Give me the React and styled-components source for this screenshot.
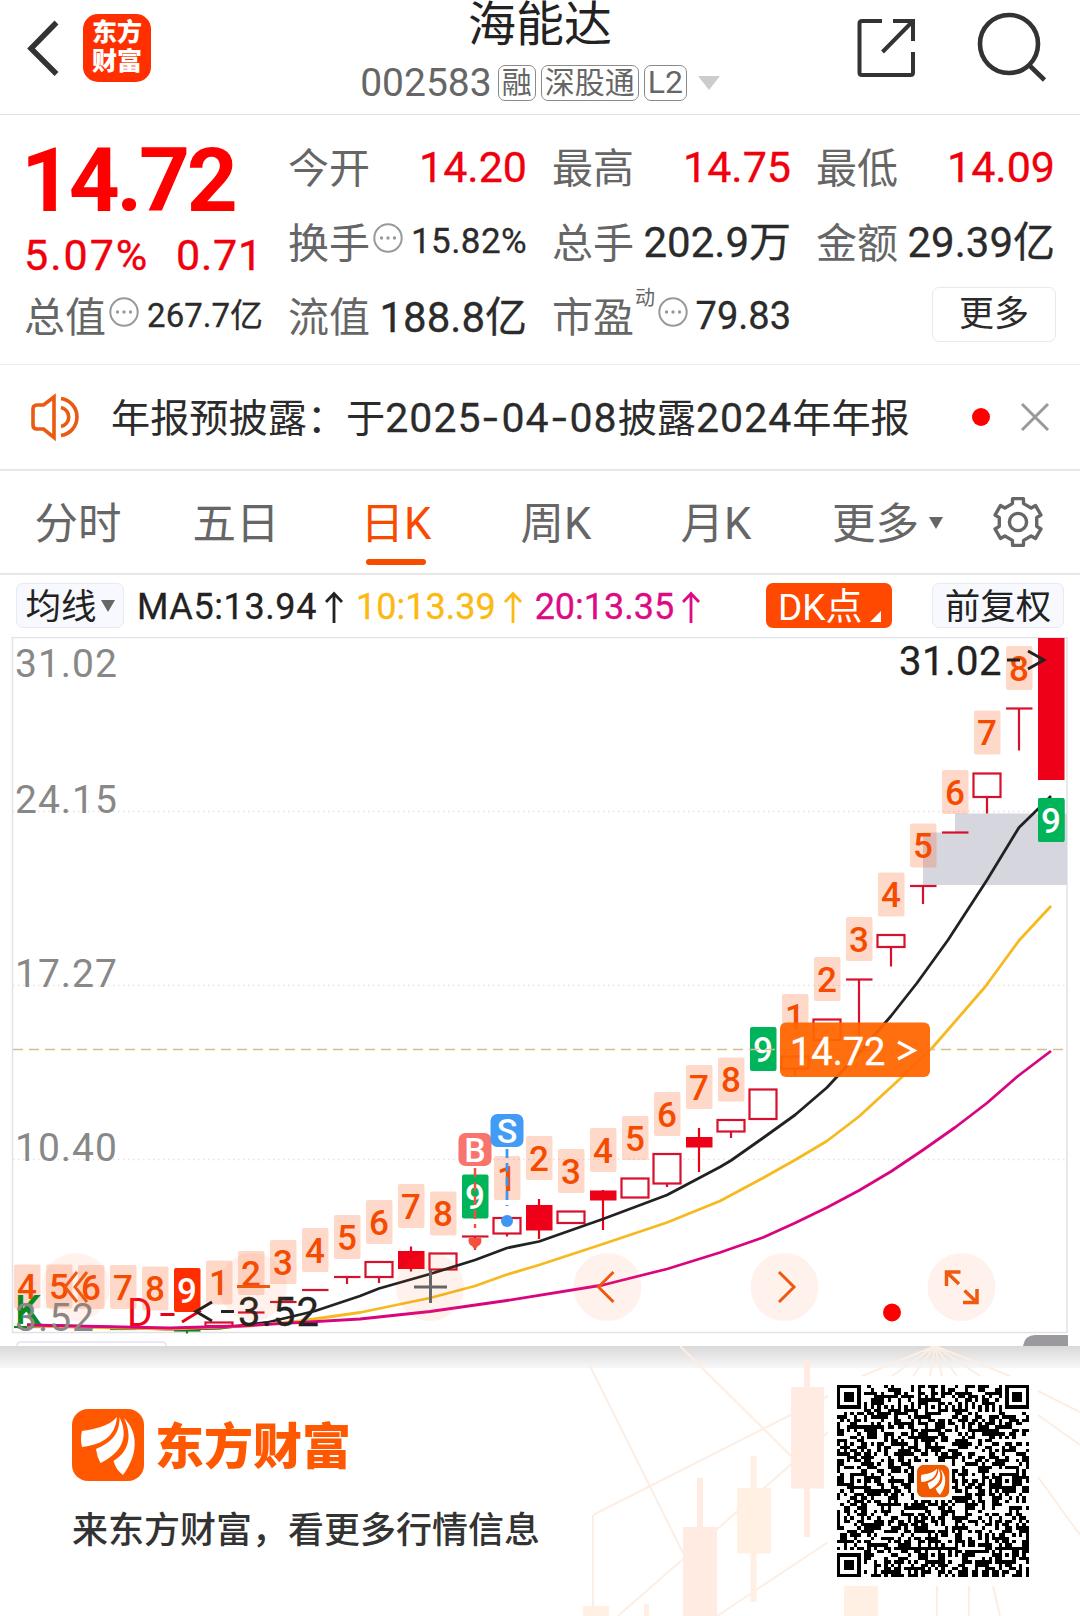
import styled, { createGlobalStyle } from "styled-components";

const GlobalStyle = createGlobalStyle`
  * {
    box-sizing: border-box;
  }

  body {
    margin: 0;
    background: #fff;
    font-family: Roboto, "Noto Sans CJK SC", sans-serif;
    color: #2b2b2b;
  }
`;

const Page = styled.main`
  width: 1080px;
  height: 1616px;
  overflow: hidden;
  display: flex;
  flex-direction: column;
  background: #fff;
`;

/* ---------- Header ---------- */

const Header = styled.header`
  height: 115px;
  flex: none;
  display: grid;
  grid-template-columns: 340px 1fr 340px;
  border-bottom: 1.5px solid #e2e2e2;
`;

const HeaderLeft = styled.div`
  display: flex;
  gap: 24px;
  padding: 14px 0 0 27px;
`;

const AppBadge = styled.div`
  width: 68px;
  height: 68px;
  border-radius: 15px;
  background: #ff2f00;
  color: #fff;
  font-size: 25px;
  font-weight: 900;
  line-height: 29px;
  text-align: center;
  padding-top: 4px;
`;

const HeaderCenter = styled.div`
  display: flex;
  flex-direction: column;
  align-items: center;
`;

const StockName = styled.h1`
  margin: 0;
  height: 60px;
  font-size: 48px;
  font-weight: 400;
  line-height: 49px;
  color: #222;
`;

const StockMeta = styled.div`
  display: flex;
  align-items: center;
  height: 46px;
  gap: 5px;
  color: #666;
`;

const Code = styled.span`
  font-size: 39px;
  margin-right: 1px;
`;

const Tag = styled.span`
  height: 36px;
  padding: 0 3px;
  border: 1.5px solid #8a8a8a;
  border-radius: 7px;
  font-size: ${(props) => props.$size || 30}px;
  line-height: 33px;
`;

const HeaderRight = styled.div`
  display: flex;
  justify-content: flex-end;
  gap: 60px;
  padding: 12px 32px 0 0;
`;

/* ---------- Quote ---------- */

const Quote = styled.section`
  height: 250px;
  flex: none;
  display: grid;
  grid-template-columns: repeat(4, 237px);
  grid-template-rows: repeat(3, 74.5px);
  column-gap: 27px;
  padding: 15px 0 0 26px;
  border-bottom: 1.5px solid #ececec;
`;

const PriceBlock = styled.div`
  grid-row: span 2;
  color: #fe0000;
`;

const Price = styled.div`
  height: 88px;
  font-size: 89px;
  font-weight: 700;
  line-height: 102px;
  letter-spacing: -3.3px;
  margin-left: -5px;
`;

const Change = styled.div`
  display: flex;
  justify-content: space-between;
  padding-right: 0;
  margin-left: -2px;
  font-size: 43px;
  line-height: 74px;
  letter-spacing: 0.8px;
  -webkit-text-stroke: 0.4px;
  color: #f0000c;

  & > span:first-child {
    letter-spacing: 2px;
  }
`;

const Cell = styled.div`
  display: flex;
  align-items: center;
  white-space: nowrap;
`;

const Label = styled.span`
  margin: -4px 0 0 -2px;
  font-size: 41px;
  color: #666;
`;

const Value = styled.span`
  margin-left: auto;
  margin-top: ${(props) => (props.$unit ? -6 : 0)}px;
  font-size: ${(props) => props.$size || 43}px;
  letter-spacing: ${(props) => props.$spacing || 0}px;
  -webkit-text-stroke: 0.3px;
  color: ${(props) => (props.$up ? "#f0000c" : "#2b2b2b")};
`;

const Sup = styled.sup`
  align-self: flex-start;
  width: 21px;
  padding-left: 1px;
  font-size: 20px;
  line-height: 39px;
  color: #666;
`;

const MoreButton = styled.button`
  width: 124px;
  height: 55px;
  margin: -4px -1px 0 auto;
  border: 1.5px solid #ebe8ea;
  border-radius: 7px;
  background: #fff;
  font: inherit;
  font-size: 35px;
  line-height: 54px;
  padding: 0;
  color: #2b2b2b;
`;

/* ---------- News ---------- */

const News = styled.section`
  height: 106px;
  flex: none;
  display: flex;
  align-items: center;
  padding: 0 30px 0 29px;
  border-bottom: 2px solid #e7e7e7;
`;

const NewsText = styled.p`
  flex: 1;
  margin: -5px 0 0 28px;
  font-size: 39.2px;
  white-space: nowrap;
`;

const NewsNumber = styled.span`
  font-size: 41px;
  letter-spacing: 1px;
  -webkit-text-stroke: 0.3px;
`;

const Hyphen = styled.span`
  display: inline-block;
  width: 20px;
  transform: scaleX(1.3);
  text-align: center;
`;

const RedDot = styled.span`
  width: 18px;
  height: 18px;
  margin-right: 30px;
  border-radius: 50%;
  background: #fe0000;
`;

/* ---------- Tabs ---------- */

const Tabs = styled.nav`
  height: 104px;
  flex: none;
  display: grid;
  grid-template-columns: 156px repeat(4, 160px) 185px 1fr;
  align-items: start;
  border-bottom: 2px solid #e7e7e7;
`;

const Tab = styled.div`
  display: flex;
  flex-direction: column;
  align-items: center;
  font-size: 43.5px;
  line-height: 88px;
  height: 100px;
  padding-top: 10px;
  color: ${(props) => (props.$active ? "#f74b00" : "#666")};

  &::after {
    content: "";
    width: 60px;
    height: 6px;
    border-radius: 3px;
    margin-top: -10px;
    flex: none;
    background: ${(props) => (props.$active ? "#f74b00" : "transparent")};
  }
`;

const MoreTab = styled.div`
  display: flex;
  align-items: center;
  gap: 10px;
  padding: 10px 0 0 36px;
  font-size: 43.5px;
  line-height: 88px;
  color: #666;
`;

const GearSlot = styled.div`
  padding: 24px 0 0 11px;
`;

/* ---------- Indicators ---------- */

const Indicators = styled.section`
  height: 62px;
  flex: none;
  display: flex;
  align-items: flex-start;
  padding: 8px 16px 0;
  font-size: 36px;
  white-space: nowrap;
`;

const Chip = styled.div`
  display: flex;
  align-items: center;
  justify-content: center;
  gap: 4px;
  height: 45px;
  width: ${(props) => props.$width}px;
  padding-bottom: 4px;
  border: 1.5px solid #e9e9f2;
  border-radius: 7px;
  background: #f7f9fe;
  font-size: 35.5px;
  color: #222;
`;

const DkChip = styled(Chip)`
  justify-content: flex-start;
  margin: 0 40px 0 auto;
  padding-left: 12px;
  border: 0;
  background: #ff4800;
  color: #fff;
  font-size: 37px;
  gap: 7px;
`;

const Corner = styled.i`
  align-self: flex-end;
  margin-bottom: 2px;
  border-left: 11px solid transparent;
  border-bottom: 11px solid #fff;
`;

const Caret = styled.i`
  position: relative;
  top: ${(props) => props.$shift || 0}px;
  border: ${(props) => props.$w / 2}px solid transparent;
  border-top: ${(props) => props.$h}px solid ${(props) => props.$color || "#666"};
  border-bottom: 0;
`;

const HeaderCaret = styled(Caret)`
  margin-left: 6px;
`;

const Average = styled.div`
  display: flex;
  align-items: center;
  gap: 8px;
  height: 47px;
  margin-left: 13px;
  letter-spacing: ${(props) => props.$spacing}px;
  -webkit-text-stroke: 0.3px;
  color: ${(props) => props.$color};
`;

const ChartSvg = styled.svg`
  display: block;
  flex: none;
  font-family: Roboto, sans-serif;
`;

/* ---------- Footer ---------- */

const Footer = styled.footer`
  position: relative;
  flex: 1;
  display: flex;
  justify-content: space-between;
  padding: 0 42px 0 72px;

  &::before {
    content: "";
    position: absolute;
    inset: 0 0 auto;
    height: 22px;
    background: linear-gradient(rgba(0, 0, 0, 0.15), rgba(0, 0, 0, 0.03));
  }
`;

const Watermark = styled.svg`
  position: absolute;
  inset: 0;
`;

const Brand = styled.div`
  position: relative;
  padding-top: 63px;
`;

const BrandRow = styled.div`
  display: flex;
  align-items: center;
  gap: 11px;
  height: 72px;
`;

const BrandName = styled.span`
  font-size: 49px;
  font-weight: 900;
  line-height: 72px;
  padding-top: 5px;
  color: #ff5800;
`;

const Slogan = styled.p`
  margin: 24px 0 0;
  font-size: 36px;
  font-weight: 500;
  line-height: 52px;
  color: #333;
`;

const QrCard = styled.div`
  position: relative;
  width: 210px;
  height: 210px;
  margin-top: 30px;
  padding: 9px;
  background: #fff;
`;

/* ---------- Icons ---------- */

const InfoSvg = styled.svg`
  flex: none;
  margin: -8px 0 0 3px;
`;

function InfoIcon() {
  return (
    <InfoSvg width="30" height="30" viewBox="0 0 30 30">
      <circle cx="15" cy="15" r="13.7" fill="none" stroke="#999" strokeWidth="2" />
      <circle cx="8.5" cy="15" r="1.7" fill="#999" />
      <circle cx="15" cy="15" r="1.7" fill="#999" />
      <circle cx="21.5" cy="15" r="1.7" fill="#999" />
    </InfoSvg>
  );
}

function GearIcon() {
  const points = [];
  for (let k = 0; k < 6; k++) {
    [
      [19.2, -17],
      [24, -13],
      [24, 13],
      [19.2, 17],
    ].forEach(([r, offset]) => {
      const a = ((k * 60 - 90 + offset) * Math.PI) / 180;
      points.push(`${26 + r * Math.cos(a)},${27 + r * Math.sin(a)}`);
    });
  }

  return (
    <svg width="54" height="54" viewBox="0 0 54 54">
      <g fill="none" stroke="#666" strokeWidth="3.4" strokeLinejoin="round">
        <polygon points={points.join(" ")} />
        <circle cx="26" cy="27" r="8.6" />
      </g>
    </svg>
  );
}

function BrandMark({ size, color = "#ff5800", ...rest }) {
  return (
    <svg width={size} height={size} viewBox="0 0 72 72" {...rest}>
      <rect width="72" height="72" rx="16" fill={color} />
      <g fill="#fff">
        <path d="M45 8C36 18 22 20 10 22Q8 30 10 38C27 36 43 30 45 8Z" />
        <path d="M47.5 8C48 26 38 34 24 40Q25 48 28.5 54C45 46 59 32 47.5 8Z" />
        <path d="M52 9C67 24 66 46 51 66Q44 61 41.5 52C52 46 63 32 52 9Z" />
      </g>
    </svg>
  );
}

/* ---------- QR code ---------- */

const QR_SIZE = 57;

function ring(x, y, cx, cy) {
  return Math.max(Math.abs(x - cx), Math.abs(y - cy));
}

function qrPath() {
  let seed = 20583;
  let d = "";
  const corners = [
    [3, 3],
    [53, 3],
    [3, 53],
  ];
  const aligns = [
    [28, 6],
    [6, 28],
    [50, 28],
    [28, 50],
    [50, 50],
  ];

  for (let y = 0; y < QR_SIZE; y++) {
    for (let x = 0; x < QR_SIZE; x++) {
      seed = (seed * 1103515245 + 12345) % 2147483648;
      let dark = seed / 2147483648 < 0.52;
      if (x === 6 || y === 6) dark = (x + y) % 2 === 0;
      aligns.forEach(([cx, cy]) => {
        const r = ring(x, y, cx, cy);
        if (r <= 2) dark = r !== 1;
      });
      corners.forEach(([cx, cy]) => {
        const r = ring(x, y, cx, cy);
        if (r <= 4) dark = r !== 4 && r !== 2;
      });
      if (ring(x, y, 28, 28) <= 5) dark = false;
      if (dark) d += `M${x} ${y}h1v1h-1z`;
    }
  }
  return d;
}

function QrCode() {
  return (
    <svg width="192" height="192" viewBox="0 0 57 57">
      <path d={qrPath()} shapeRendering="crispEdges" />
      <BrandMark x="23.7" y="23.7" size="9.7" color="#f05a00" />
    </svg>
  );
}

/* ---------- Chart ---------- */

// marker: [label, top of its box, fill]
// candle: [kind, body top, body bottom, wick top, wick bottom]
const DAYS = [
  { marker: ["4", 1264.5], candle: ["down", 1327, 1328] },
  { marker: ["5", 1264.5] },
  { marker: ["6", 1265] },
  { marker: ["7", 1265], candle: ["down", 1329, 1330] },
  { marker: ["8", 1266.5], candle: ["down", 1328.5, 1329.5] },
  { marker: ["9", 1268, "#ff2d00"], candle: ["down", 1330.5, 1331.5, 1330, 1333.5] },
  { marker: ["1", 1260.5], candle: ["hollow", 1322.5, 1326] },
  { marker: ["2", 1251], candle: ["flat", 1312.5] },
  { marker: ["3", 1240], candle: ["flat", 1302] },
  { marker: ["4", 1228], candle: ["flat", 1290] },
  { marker: ["5", 1215], candle: ["flat", 1277, 1277, 1277, 1284] },
  { marker: ["6", 1200], candle: ["hollow", 1262, 1277, 1277, 1283] },
  { marker: ["7", 1184], candle: ["solid", 1251, 1269, 1246.5, 1271.5] },
  { marker: ["8", 1191.5], candle: ["hollow", 1253.5, 1269.5] },
  { marker: ["9", 1174.5, "#00b45a"], candle: ["flat", 1236.5, 1236.5, 1236.5, 1250] },
  { marker: ["1", 1156], candle: ["hollow", 1218, 1233.5, 1233, 1236.5] },
  { marker: ["2", 1136], candle: ["solid", 1205, 1230.5, 1199, 1239] },
  { marker: ["3", 1149], candle: ["hollow", 1211.5, 1223] },
  { marker: ["4", 1128], candle: ["solid", 1190.5, 1200.5, 1190, 1230] },
  { marker: ["5", 1116], candle: ["hollow", 1178.5, 1197.5] },
  { marker: ["6", 1092], candle: ["hollow", 1154, 1183.5, 1183, 1187] },
  { marker: ["7", 1065], candle: ["solid", 1137, 1147.5, 1128, 1172] },
  { marker: ["8", 1057.5], candle: ["hollow", 1120, 1131.5, 1131, 1138] },
  { marker: ["9", 1027, "#00b45a"], candle: ["hollow", 1089.5, 1119] },
  { marker: ["1", 994], candle: ["hollow", 1056.5, 1068.5, 1068, 1076] },
  { marker: ["2", 957], candle: ["hollow", 1019.5, 1040] },
  { marker: ["3", 917], candle: ["flat", 979.5, 979.5, 979.5, 1036] },
  { marker: ["4", 872.5], candle: ["hollow", 935, 947, 947, 966.5] },
  { marker: ["5", 823.5], candle: ["flat", 886, 886, 886, 904] },
  { marker: ["6", 770], candle: ["flat", 832.5] },
  { marker: ["7", 710.5], candle: ["hollow", 773.5, 797, 797, 813.5] },
  { marker: ["8", 646], candle: ["flat", 708.5, 708.5, 708.5, 750.5] },
  { marker: ["9", 798, "#00b45a"], candle: ["solid", 638, 780] },
];

const MA5 =
  "27,1325 100,1327 170,1329 220,1328 267,1322.5 315,1311 360,1296 379,1288.5 430,1274 475,1260 507,1248 539,1241.5 603,1219 667,1195 720,1167 731,1160.5 763,1138 795,1115 827,1087.5 859,1053 891,1016 917,983 948,940 987,880 1019,827.5 1038,809 1051,796";
const MA10 =
  "27,1326 170,1329 250,1326 300,1321 360,1312.5 430,1298 475,1286 507,1274.5 539,1265 603,1244 667,1222.5 720,1201 763,1178 795,1160 827,1141 859,1116.5 902,1077 933,1047 985,987 1019,940.5 1051,906";
const MA20 =
  "27,1325 170,1328 240,1326 360,1319 430,1311.5 507,1300.5 603,1285 667,1269 720,1252.5 763,1237.5 795,1223 827,1207.5 859,1190.5 891,1171.5 923,1150 955,1127.5 987,1103 1018,1076 1051,1051";

const SCALE = [
  ["31.02", 677],
  ["24.15", 812.5],
  ["17.27", 986.5],
  ["10.40", 1161],
  ["3.52", 1331],
];

const CONTROL_X = [76, 253, 430, 607.5, 784.5, 961.5];

const dayX = (index) => 27 + index * 32;

function Candle({ x, candle }) {
  const [kind, top, bottom = top, wickTop, wickBottom] = candle;
  const color = kind === "down" ? "#0a8a1e" : kind === "solid" ? "#ee0018" : "#d8102c";

  return (
    <g stroke={color} strokeWidth="2.2" fill="none">
      {wickTop && <path d={`M${x} ${wickTop}V${wickBottom}`} />}
      {kind === "hollow" && (
        <rect x={x - 13.5} y={top} width="27" height={bottom - top} fill="#fff" />
      )}
      {kind === "solid" && (
        <rect x={x - 13} y={top} width="26.5" height={bottom - top} fill={color} stroke="none" />
      )}
      {(kind === "flat" || kind === "down") && <path d={`M${x - 13} ${top}h26.5`} />}
    </g>
  );
}

function Marker({ x, marker }) {
  const [label, top, fill] = marker;

  return (
    <g>
      <rect
        x={x - 13}
        y={top}
        width="26.5"
        height="44"
        rx="2"
        fill={fill || "#fb5a1c"}
        fillOpacity={fill ? 1 : 0.23}
      />
      <text
        x={x}
        y={top + 34.5}
        fontSize="35"
        fontWeight="500"
        textAnchor="middle"
        fill={fill ? "#fff" : "#f44b00"}
      >
        {label}
      </text>
    </g>
  );
}

function Chart() {
  return (
    <ChartSvg width="1080" height="709" viewBox="0 637 1080 709">
      <rect x="12.5" y="637.5" width="1054.5" height="695" fill="none" stroke="#e2e2e6" strokeWidth="1.5" />
      {[811.5, 985.5, 1159.5].map((y) => (
        <path key={y} d={`M13 ${y}H1067`} stroke="#eadfe4" strokeWidth="1.5" strokeDasharray="1.5 3.5" />
      ))}
      <path d="M923 832.5h32V813.5h112V885H923z" fill="#d5d6de" />

      <g fontSize="39" fill="#f0001a">
        <text x="127" y="1326">D</text>
        <path d="M160.5 1314.5h14M182 1301l17 10.5l-17 10.5" fill="none" stroke="#e8001a" strokeWidth="3" />
      </g>
      {DAYS.map((day, i) => (
        <g key={i}>
          {day.candle && <Candle x={dayX(i)} candle={day.candle} />}
          <Marker x={dayX(i)} marker={day.marker} />
        </g>
      ))}

      <g fill="none" strokeWidth="2.8" strokeLinejoin="round">
        <polyline points={MA5} stroke="#222" />
        <polyline points={MA10} stroke="#f6b91f" />
        <polyline points={MA20} stroke="#d9057f" />
      </g>
      <g>
        <rect x="1038" y="798" width="26.5" height="44" rx="2" fill="#00b45a" />
        <path d="M18 1327.5h9" stroke="#0a8a1e" strokeWidth="2" />
      </g>
      <text x="1051" y="832.5" fontSize="35" fontWeight="500" textAnchor="middle" fill="#fff">
        9
      </text>

      <text x="15" y="1324" fontSize="41" fontWeight="500" fill="#0a8a1e">K</text>
      <g fontSize="39" fill="#888">
        {SCALE.map(([label, y]) => (
          <text key={label} x="15" y={y} letterSpacing="1">
            {label}
          </text>
        ))}
      </g>
      <g fontSize="40" fill="#222" stroke="#222" strokeWidth="0.3">
        <text x="899" y="674.5" letterSpacing="0.5">31.02</text>
        <text x="238" y="1326" letterSpacing="1">3.52</text>
      </g>
      <path
        d="M1007 660h13M1028 651l16 9l-16 9M221 1311.5h13M212 1302l-16 9.5l16 9.5"
        fill="none"
        stroke="#222"
        strokeWidth="3"
      />

      <path d="M475 1168V1228" stroke="#f5503c" strokeWidth="2.5" strokeDasharray="9 5" />
      <path d="M469 1238h12a6 6 0 0 1-3 8l-3 4l-3-4a6 6 0 0 1-3-8z" fill="#f5503c" />
      <path d="M507 1149V1206" stroke="#3f97f3" strokeWidth="2.8" strokeDasharray="9 5" />
      <circle cx="507" cy="1221" r="6" fill="#3f97f3" />
      <rect x="458.5" y="1133" width="33" height="33" rx="7" fill="#f8746d" />
      <rect x="490.5" y="1114" width="33" height="33" rx="7" fill="#429cf5" />
      <g fontSize="34" fontWeight="500" fill="#fff" textAnchor="middle">
        <text x="475" y="1161.5">B</text>
        <text x="507" y="1142.5">S</text>
      </g>

      <path d="M13 1049.5H1067" stroke="#d6bd8c" strokeWidth="1.7" strokeDasharray="10 6" />
      <rect x="780" y="1022.5" width="150" height="54.5" rx="6" fill="#ff6600" fillOpacity="0.94" />
      <text x="790" y="1065" fontSize="38" fill="#fff" stroke="#fff" strokeWidth="0.4">
        14.72
      </text>
      <path d="M898 1042l16 8.5l-16 8.5" fill="none" stroke="#fff" strokeWidth="3.2" />

      {CONTROL_X.map((x) => (
        <circle key={x} cx={x} cy="1287" r="34" fill="#fb5a1c" fillOpacity="0.08" />
      ))}
      <g fill="none" stroke="#f05a10" strokeWidth="3">
        <path d="M77 1272l-12 15l12 15M87 1272l-12 15l12 15" />
        <path d="M237 1286.5h33" />
        <path d="M414 1287h33M430.5 1270v33" stroke="#666" />
        <path d="M613.5 1272l-15 15l15 15" />
        <path d="M779 1272l15 15l-15 15" />
        <path d="M946.5 1286v-14h14M947 1272.5l12 11.5" strokeWidth="3.5" />
        <path d="M977 1289v13.5h-14M976.5 1302l-12-11.5" strokeWidth="3.5" />
      </g>
      <circle cx="892" cy="1312.5" r="9" fill="#fe0000" />

      <path d="M17 1346q0-4 4-4H162q4 0 4 4" fill="none" stroke="#e6e0f5" strokeWidth="1.5" />
      <path d="M1023 1346q2-11 12-11h33v11z" fill="#9b999e" />
    </ChartSvg>
  );
}

function FooterArt() {
  return (
    <Watermark width="1080" height="270" viewBox="0 1346 1080 270">
      <g fill="none" stroke="#fdeee4" strokeWidth="2">
        <path d="M680 1346L791 1456M590 1366L683 1553M593 1515L828 1396M618 1616L828 1432M717 1616L828 1542M593 1515V1608" />
        <path d="M935 1346L862 1376M935 1346L892 1376M935 1346L913 1376M935 1346L930 1376M935 1346L942 1376M935 1346L957 1376M935 1346L980 1376M935 1346L1010 1376" />
        <path d="M1038 1391L1080 1412M1038 1415L1080 1445M1038 1477L1080 1535M937 1586V1616M969 1586V1616M993 1586L1000 1616" />
      </g>
      <g fill="#fff0e3">
        <path d="M791 1387h33v101.5h-33zM804 1360h6v177h-6z" fill="#ffebe1" />
        <path d="M737 1488h34v65.5h-34zM750.5 1456h6v146h-6z" />
        <path d="M683 1527h34v89h-34zM697 1478h6v49h-6z" fill="#ffebe1" />
        <path d="M844 1586h34v30h-34zM583 1606h26v10h-26zM644 1604h5v12h-5z" />
      </g>
    </Watermark>
  );
}

function App() {
  return (
    <>
      <GlobalStyle />
      <Page>
        <Header>
          <HeaderLeft>
            <svg width="32" height="68" viewBox="0 0 32 68">
              <path d="M29.5 8.5L4 34.5L29.5 60" fill="none" stroke="#333" strokeWidth="5.5" />
            </svg>
            <AppBadge>
              东方
              <br />
              财富
            </AppBadge>
          </HeaderLeft>
          <HeaderCenter>
            <StockName>海能达</StockName>
            <StockMeta>
              <Code>002583</Code>
              <Tag>融</Tag>
              <Tag>深股通</Tag>
              <Tag $size={32}>L2</Tag>
              <HeaderCaret $w={22} $h={14} $color="#ccc" />
            </StockMeta>
          </HeaderCenter>
          <HeaderRight>
            <svg width="60" height="70" viewBox="0 0 60 70">
              <path
                d="M25 9H5Q2.5 9 2.5 11.5V60.5Q2.5 63 5 63H53.500Q56 63 56 60.5V40M36 9H56V29M55 10L25.5 40"
                fill="none"
                stroke="#333"
                strokeWidth="4"
              />
            </svg>
            <svg width="71" height="72" viewBox="0 0 71 72">
              <g fill="none" stroke="#333" strokeWidth="4.6">
                <circle cx="32" cy="32" r="29" />
                <path d="M52 53L67.5 68" />
              </g>
            </svg>
          </HeaderRight>
        </Header>

        <Quote>
          <PriceBlock>
            <Price>14.72</Price>
            <Change>
              <span>5.07%</span>
              <span>0.71</span>
            </Change>
          </PriceBlock>
          <Cell>
            <Label>今开</Label>
            <Value $up>14.20</Value>
          </Cell>
          <Cell>
            <Label>最高</Label>
            <Value $up>14.75</Value>
          </Cell>
          <Cell>
            <Label>最低</Label>
            <Value $up>14.09</Value>
          </Cell>
          <Cell>
            <Label>换手</Label>
            <InfoIcon />
            <Value $size={35} $spacing={0.4}>
              15.82%
            </Value>
          </Cell>
          <Cell>
            <Label>总手</Label>
            <Value $size={42} $unit>
              202.9万
            </Value>
          </Cell>
          <Cell>
            <Label>金额</Label>
            <Value $size={42} $unit>
              29.39亿
            </Value>
          </Cell>
          <Cell>
            <Label>总值</Label>
            <InfoIcon />
            <Value $size={33} $unit>
              267.7亿
            </Value>
          </Cell>
          <Cell>
            <Label>流值</Label>
            <Value $size={42} $unit>
              188.8亿
            </Value>
          </Cell>
          <Cell>
            <Label>市盈</Label>
            <Sup>动</Sup>
            <InfoIcon />
            <Value $size={38}>79.83</Value>
          </Cell>
          <Cell>
            <MoreButton>更多</MoreButton>
          </Cell>
        </Quote>

        <News>
          <svg width="54" height="48" viewBox="0 0 54 48">
            <g fill="none" stroke="#ea5a10" strokeWidth="3.6">
              <path d="M25 4L14.5 12H8Q4 12 4 16V32Q4 36 8 36H14.5L25 44.5Z" />
              <path d="M32 5.5A18.7 18.7 0 0 1 32 42.5M32 14.5A9.700 9.700 0 0 1 32 33.5" />
            </g>
          </svg>
          <NewsText>
            年报预披露：于
            <NewsNumber>
              2025<Hyphen>-</Hyphen>04<Hyphen>-</Hyphen>08
            </NewsNumber>
            披露<NewsNumber>2024</NewsNumber>年年报
          </NewsText>
          <RedDot />
          <svg width="30" height="30" viewBox="0 0 30 30">
            <path d="M2 2L28 28M28 2L2 28" stroke="#999" strokeWidth="3" />
          </svg>
        </News>

        <Tabs>
          <Tab>分时</Tab>
          <Tab>五日</Tab>
          <Tab $active>日K</Tab>
          <Tab>周K</Tab>
          <Tab>月K</Tab>
          <MoreTab>
            更多
            <Caret $w={15} $h={12} $shift={-2} />
          </MoreTab>
          <GearSlot>
            <GearIcon />
          </GearSlot>
        </Tabs>

        <Indicators>
          <Chip $width={108}>
            均线
            <Caret $w={14} $h={12} $shift={2} />
          </Chip>
          {[
            ["MA5:13.94", "#222", 0.6],
            ["10:13.39", "#fbb912", 0],
            ["20:13.35", "#dd0a86", 0],
          ].map(([text, color, spacing]) => (
            <Average key={text} $color={color} $spacing={spacing}>
              {text}
              <svg width="18" height="32" viewBox="0 0 18 32">
                <path d="M9 32V3M1 11L9 2.5L17 11" fill="none" stroke={color} strokeWidth="2.8" />
              </svg>
            </Average>
          ))}
          <DkChip $width={126}>
            DK点
            <Corner />
          </DkChip>
          <Chip $width={132}>前复权</Chip>
        </Indicators>

        <Chart />

        <Footer>
          <FooterArt />
          <Brand>
            <BrandRow>
              <BrandMark size={72} />
              <BrandName>东方财富</BrandName>
            </BrandRow>
            <Slogan>来东方财富，看更多行情信息</Slogan>
          </Brand>
          <QrCard>
            <QrCode />
          </QrCard>
        </Footer>
      </Page>
    </>
  );
}

export default App;
